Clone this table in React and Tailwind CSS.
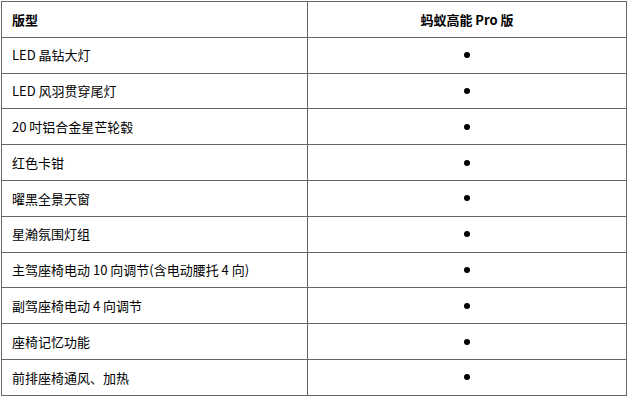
import React from 'react';

const rows = [
  'LED 晶钻大灯',
  'LED 风羽贯穿尾灯',
  '20 吋铝合金星芒轮毂',
  '红色卡钳',
  '曜黑全景天窗',
  '星瀚氛围灯组',
  '主驾座椅电动 10 向调节(含电动腰托 4 向)',
  '副驾座椅电动 4 向调节',
  '座椅记忆功能',
  '前排座椅通风、加热',
];

export default function App() {
  return (
    <div className="w-[630px] h-[400px] bg-white pl-px pt-px" style={{ fontFamily: '"Microsoft YaHei", "Noto Sans CJK SC", sans-serif' }}>
      <table className="w-[626px] border-collapse text-[13px] text-black">
        <thead>
          <tr className="h-[35.8px]">
            <th className="w-[306px] border border-[#666] pl-[10px] text-left font-bold">版型</th>
            <th className="border border-[#666] text-center font-bold">蚂蚁高能 Pro 版</th>
          </tr>
        </thead>
        <tbody>
          {rows.map((label) => (
            <tr key={label} className="h-[35.8px]">
              <td className="border border-[#666] pl-[10px]">{label}</td>
              <td className="border border-[#666]">
                <div className="mx-auto h-[6px] w-[6px] rounded-full bg-black" />
              </td>
            </tr>
          ))}
        </tbody>
      </table>
    </div>
  );
}
